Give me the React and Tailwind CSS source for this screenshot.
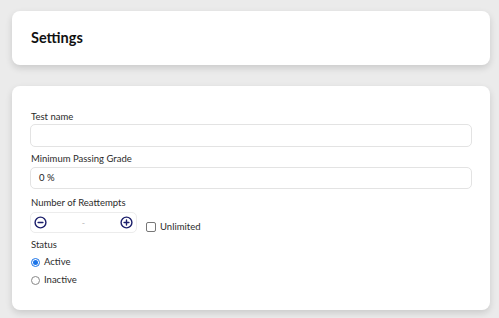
import React from "react";

function CircleIcon({ plus }) {
  return (
    <svg width="13" height="13" viewBox="0 0 24 24" fill="none" stroke="#1c1f6b" strokeWidth="2.6" strokeLinecap="round">
      <circle cx="12" cy="12" r="10" />
      <line x1="7.5" y1="12" x2="16.5" y2="12" />
      {plus && <line x1="12" y1="7.5" x2="12" y2="16.5" />}
    </svg>
  );
}

export default function App() {
  return (
    <div
      className="w-[499px] h-[318px] overflow-hidden bg-[#ebebeb] pt-[11px] pl-[12px]"
      style={{ fontFamily: "Lato, 'Noto Sans', sans-serif" }}
    >
      <div className="w-[478px] h-[54px] bg-white rounded-[8px] shadow-[0_3px_7px_rgba(0,0,0,0.14)] flex items-center pl-[19px]">
        <h1 className="text-[14.5px] font-bold text-[#111] leading-none">Settings</h1>
      </div>

      <div className="mt-[21px] w-[478px] h-[224px] bg-white rounded-[8px] shadow-[0_3px_7px_rgba(0,0,0,0.14)] px-[18px] pt-[25px] text-[#2b2b2b]">
        <div className="text-[9.5px] font-normal leading-[12px] pl-[1px]">Test name</div>
        <div className="mt-[1px] h-[23px] w-full rounded-[5px] border border-[#e3e3e3]" />

        <div className="mt-[6px] text-[9.5px] font-normal leading-[12px] pl-[1px]">Minimum Passing Grade</div>
        <div className="mt-[2px] h-[22px] w-full rounded-[5px] border border-[#e3e3e3] flex items-center pl-[8px] text-[9.5px] text-[#222]">
          0 %
        </div>

        <div className="mt-[8px] text-[9.5px] font-normal leading-[12px] pl-[1px]">Number of Reattempts</div>
        <div className="mt-[3px] flex items-center">
          <div className="w-[107px] h-[21px] rounded-[5px] border border-[#ececec] flex items-center justify-between px-[3px]">
            <CircleIcon />
            <span className="text-[9px] text-[#bbb]">-</span>
            <CircleIcon plus />
          </div>
          <div className="ml-[9px] mt-[8px] flex items-center">
            <span className="w-[10px] h-[10px] rounded-[2px] border border-[#777] bg-white" />
            <span className="ml-[4px] text-[9.5px] font-normal leading-none">Unlimited</span>
          </div>
        </div>

        <div className="mt-[6px] text-[9.5px] font-normal leading-[12px] pl-[1px]">Status</div>
        <div className="mt-[5px] flex items-center pl-[1px]">
          <span className="w-[9px] h-[9px] rounded-full border border-[#1a73e8] bg-white flex items-center justify-center">
            <span className="w-[5px] h-[5px] rounded-full bg-[#1a73e8]" />
          </span>
          <span className="ml-[4px] text-[9.5px] font-normal leading-[12px]">Active</span>
        </div>
        <div className="mt-[6px] flex items-center pl-[1px]">
          <span className="w-[9px] h-[9px] rounded-full border border-[#888] bg-white" />
          <span className="ml-[4px] text-[9.5px] font-normal leading-[12px]">Inactive</span>
        </div>
      </div>
    </div>
  );
}
